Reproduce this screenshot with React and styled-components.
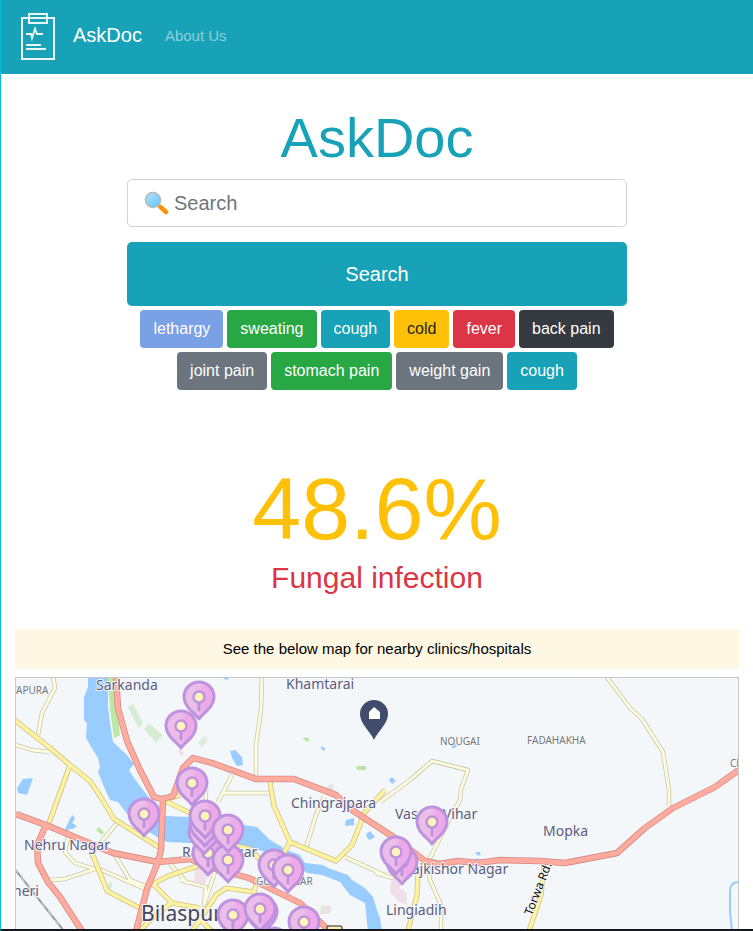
import React from "react";
import styled, { createGlobalStyle } from "styled-components";

const GlobalStyle = createGlobalStyle`
  *, *::before, *::after { box-sizing: border-box; }
  body {
    margin: 0;
    background: #fff;
    font-family: "Liberation Sans", Arial, sans-serif;
    font-size: 16px;
    line-height: 24px;
    color: #212529;
  }
`;

const Page = styled.div`
  min-height: 100vh;
  border-left: 1px solid #00bcd4;
  border-bottom: 2px solid #14181c;
`;

const NavBar = styled.nav`
  display: flex;
  align-items: center;
  height: 74px;
  padding: 0 16px 4px;
  background: #17a2b8;
`;

const Brand = styled.a`
  display: flex;
  align-items: center;
  gap: 16px;
  font-size: 20px;
  line-height: 30px;
  color: #fff;
  text-decoration: none;
`;

const LogoIcon = styled.svg`
  display: block;
  width: 40px;
  height: 50px;
  margin-top: 4px;
`;

const NavLink = styled.a`
  margin-left: 23px;
  padding-top: 2px;
  font-size: 15px;
  color: rgba(255, 255, 255, 0.5);
  text-decoration: none;
`;

const Main = styled.main`
  padding: 30px 14px 0;
`;

const Title = styled.h1`
  margin: 0 0 8px;
  font-size: 56px;
  font-weight: 400;
  line-height: 67px;
  text-align: center;
  color: #17a2b8;
`;

const SearchForm = styled.form`
  display: flex;
  flex-direction: column;
  gap: 15px;
  max-width: 500px;
  margin: 0 auto;
`;

const SearchField = styled.div`
  position: relative;
`;

const SearchIcon = styled.svg`
  position: absolute;
  top: 12px;
  left: 17px;
  width: 25px;
  height: 24px;
  pointer-events: none;
`;

const SearchInput = styled.input`
  display: block;
  width: 100%;
  height: 48px;
  padding: 8px 16px 8px 46px;
  border: 1px solid #ced4da;
  border-radius: 5px;
  background: #fff;
  font-family: inherit;
  font-size: 20px;
  line-height: 30px;
  color: #495057;
  &::placeholder { color: #6c757d; opacity: 1; }
`;

const SearchButton = styled.button`
  height: 64px;
  border: 0;
  border-radius: 5px;
  background: #17a2b8;
  font-family: inherit;
  font-size: 20px;
  color: #fff;
`;

const TagList = styled.div`
  display: flex;
  flex-wrap: wrap;
  justify-content: center;
  gap: 4px;
  max-width: 500px;
  margin: 4px auto 0;
`;

const Tag = styled.button`
  height: 38px;
  padding: 0 13px;
  border: 0;
  border-radius: 4px;
  background: ${(p) => p.$bg};
  font-family: inherit;
  font-size: 16px;
  line-height: 24px;
  color: ${(p) => p.$fg || "#fff"};
`;

const Result = styled.section`
  margin-top: 66px;
  text-align: center;
`;

const Percent = styled.div`
  font-size: 88px;
  line-height: 106px;
  color: #ffc107;
`;

const Condition = styled.h2`
  margin: 0;
  font-size: 30px;
  font-weight: 400;
  line-height: 32px;
  color: #dc3545;
`;

const Notice = styled.p`
  margin: 35px 0 8px;
  padding: 8px;
  background: #fdf7e3;
  font-size: 15px;
  line-height: 24px;
  text-align: center;
  color: #000;
`;

const MapFrame = styled.div`
  border: 1px solid #c8c8c8;
  border-bottom: 0;
  background: #f4f7fa;
`;

const MapCanvas = styled.svg`
  display: block;
  width: 100%;
  height: 251px;
  font-family: "Noto Sans", "Open Sans", sans-serif;
`;

const TAGS = [
  { label: "lethargy", bg: "#7aa0e6" },
  { label: "sweating", bg: "#28a745" },
  { label: "cough", bg: "#17a2b8" },
  { label: "cold", bg: "#ffc107", fg: "#212529" },
  { label: "fever", bg: "#dc3545" },
  { label: "back pain", bg: "#343a40" },
  { label: "joint pain", bg: "#6c757d" },
  { label: "stomach pain", bg: "#28a745" },
  { label: "weight gain", bg: "#6c757d" },
  { label: "cough", bg: "#17a2b8" },
];

const WATER = [
  "M88 676V687L84 697V720L87 723L86 738L93 750L98 758L100 767L98 772L104 787L110 800L118 802L128 815L143 828L157 837L167 842L190 843L225 842L247 847L270 853L290 862L300 868L307 873L322 875L340 882L350 895L365 903L368 932H382L380 918L377 910L373 897L365 888L352 880L348 875L328 868L323 865L305 863L300 855L287 850L270 840L257 827L243 825L215 818L190 817L165 816L147 795L134 778L129 770L134 764L127 755L113 742L110 723L108 707V676Z",
  "M17 788L23 779L33 778L27 795L18 793Z",
  "M65 829L71 817L73 815L75 819L72 823L77 826L73 829L69 829L66 832Z",
  "M230 751L235 750L242 757L243 765L237 766L232 758Z",
  "M223 677H229L228 680L224 679Z",
  "M321 746L325 748L325 751L321 749Z",
  "M452 742L455 743L457 746L453 749L451 746Z",
  "M389 780L392 777L396 781L392 784Z",
  "M346 820L354 818L354 825L345 826Z",
  "M366 834L370 831L375 837L370 840L367 838Z",
  "M475 852L480 852L481 854L478 856ZM473 860L479 858L479 862L473 862Z",
];

const PARKS = [
  { d: "M108 676H116L117 705L120 735L114 738L110 710Z", fill: "#b8e7a6" },
  { d: "M128 707L133 704L143 723L139 729Z", fill: "#d6edd3" },
  { d: "M144 729L149 723L163 735L156 743Z", fill: "#d6edd3" },
  { d: "M198 742L205 735L208 740L202 748Z", fill: "#dfebdf" },
  { d: "M303 739L305 737L310 739L308 742Z", fill: "#b8e7a6" },
  { d: "M356 766H366V770H357Z", fill: "#b8e7a6" },
  { d: "M96 830L99 827L104 832L102 835Z", fill: "#b8e7a6" },
  { d: "M106 884L112 881L112 888L108 891Z", fill: "#dfebdf" },
  { d: "M178 751L181 749L184 754L181 756Z", fill: "#efdfe8" },
  { d: "M195 867L210 867L205 884L194 881Z", fill: "#efdfe8" },
  { d: "M391 881L400 878L400 888L407 894V905L400 902L390 893Z", fill: "#efdfe8" },
  { d: "M321 905L332 906L330 914L320 914Z", fill: "#e9e4de" },
  { d: "M326 787L333 783L334 790L326 791Z", fill: "#e9e4de" },
];

const LANES = [
  "M53 676L55 688L42 713L38 735",
  "M16 745L32 750L50 752",
  "M262 676L261 710L256 745L256 778",
  "M232 775L218 802M222 793H270M206 790L205 818",
  "M380 802L410 780L432 761L468 770L461 789L460 800L450 818L428 862L430 880L441 905V931",
  "M606 676L630 708L642 719L663 752L669 790V806",
  "M117 823L92 853M68 837L65 852L75 863L95 869L65 879L50 880",
  "M97 868L145 889M115 855L130 880L146 886M170 864L188 884",
  "M324 797L316 815L305 851",
  "M345 857L380 873L392 878",
  "M180 880L206 887L204 905L216 869M375 873L392 878L402 872L415 855",
];

const STREETS = [
  "M12 718L50 748L70 765L90 781L100 796L114 819L160 848",
  "M70 765L49 823M92 853L107 891L140 908M165 801L180 808L192 814",
  "M153 884L168 876L192 868L215 860M153 884L172 903L200 908M165 800L180 795",
  "M270 782L274 806L290 842L336 861L352 845L365 812L385 790M290 842L282 856L274 868M258 878L254 892L226 888L216 895L200 920L212 931M140 931L150 920L171 903",
  "M418 874L417 895L408 931M544 864L541 895L529 931",
  "M236 846L250 849L262 862M200 920L192 931",
];

const HIGHWAYS = [
  "M116 676L118 708L127 741L140 770L154 797L162 799L173 796L183 768L193 758L212 763L256 779L294 779L336 795L352 810L395 838L425 861L440 864L458 861L478 863L500 860L540 861L565 863L617 853L645 828L673 808L715 787L740 769",
  "M16 814L46 825L113 853L158 862L190 859L215 869L249 878L300 903L320 922L332 933",
  "M46 825L37 845L38 863L48 882L60 897L82 931",
  "M163 798L161 850L158 862L147 889L136 931",
];

const LABELS = [
  { x: 96, y: 690, text: "Sarkanda" },
  { x: 286, y: 689, text: "Khamtarai" },
  { x: 291, y: 808, text: "Chingrajpara" },
  { x: 395, y: 819, text: "Vasant Vihar" },
  { x: 24, y: 850, text: "Nehru Nagar" },
  { x: 543, y: 836, text: "Mopka" },
  { x: 182, y: 857, text: "Rajiv Nagar" },
  { x: 403, y: 874, text: "Rajkishor Nagar" },
  { x: 386, y: 915, text: "Lingiadih" },
  { x: 13, y: 896, text: "heri" },
];

const SMALL_LABELS = [
  { x: 11, y: 694, text: "YAPURA" },
  { x: 440, y: 745, text: "NOUGAI" },
  { x: 527, y: 744, text: "FADAHAKHA" },
  { x: 730, y: 767, text: "CH" },
  { x: 256, y: 885, text: "GOL NAGAR" },
];

const PINS = [
  [199, 697], [181, 726], [192, 783], [144, 814],
  [208, 853], [204, 832], [205, 824], [205, 816],
  [228, 860], [228, 830], [274, 865], [288, 870],
  [233, 915], [274, 943], [262, 912], [260, 909], [304, 922],
  [432, 822], [402, 862], [396, 852],
];

function ClinicPin({ x, y }) {
  return (
    <g transform={`translate(${x} ${y})`}>
      <path
        d="M0 22C-4 16-15 10-15 0A15 15 0 0 1 15 0C15 10 4 16 0 22Z"
        fill="url(#pinFill)"
        stroke="#bd93df"
        strokeWidth="3"
        strokeLinejoin="round"
      />
      <path d="M0 6V13" stroke="#bd93df" strokeWidth="3" strokeLinecap="round" />
      <circle r="5.5" fill="#fff3b8" stroke="#bd93df" strokeWidth="2.4" />
    </g>
  );
}

function Roads({ paths, casing, fill, width }) {
  const d = paths.join("");
  return (
    <g fill="none" strokeLinejoin="round">
      <path d={d} stroke={casing} strokeWidth={width + 1.6} />
      <path d={d} stroke={fill} strokeWidth={width} />
    </g>
  );
}

function ClinicMap() {
  return (
    <MapCanvas
      viewBox="16 678 722 251"
      preserveAspectRatio="xMidYMin slice"
      role="img"
      aria-label="Map of nearby clinics and hospitals"
    >
      <defs>
        <linearGradient id="pinFill">
          <stop offset="0.5" stopColor="#ebbde9" />
          <stop offset="0.65" stopColor="#eea9e8" />
        </linearGradient>
      </defs>
      <path d={WATER.join("")} fill="#99cdff" />
      {PARKS.map((p) => (
        <path key={p.d} d={p.d} fill={p.fill} />
      ))}
      <path d="M14 868L64 931" stroke="#999" strokeWidth="2" />
      <path d="M14 868L64 931" stroke="#ddd" strokeWidth="1" strokeDasharray="6 5" />
      <Roads paths={LANES} casing="#c9c8aa" fill="#fdfce0" width={2.8} />
      <Roads paths={STREETS} casing="#cfc08a" fill="#fff3a0" width={3.6} />
      <Roads paths={HIGHWAYS} casing="#d48a86" fill="#ffab9d" width={4.8} />
      <path d="M739 882C733 882 730 885 730 891V912L732 931" fill="none" stroke="#99cdff" strokeWidth="2" />
      <g stroke="#f4f7fa" strokeWidth="2" strokeLinejoin="round" paintOrder="stroke">
        <g fill="#5d5d80" fontSize="14">
          {LABELS.map((l) => (
            <text key={l.text} x={l.x} y={l.y}>{l.text}</text>
          ))}
        </g>
        <g fill="#77777a" fontSize="10">
          {SMALL_LABELS.map((l) => (
            <text key={l.text} x={l.x} y={l.y}>{l.text}</text>
          ))}
        </g>
        <text x="141" y="921" fontSize="21" fill="#45455e">Bilaspur</text>
        <text transform="translate(532 916) rotate(-69)" fontSize="12" fill="#111">Torwa Rd.</text>
      </g>
      <rect x="327" y="926" width="15" height="8" rx="1" fill="#fbeeb0" stroke="#222" />
      <path d="M331 929V933M334 929V933M338 929V933" stroke="#222" />
      {PINS.map(([x, y]) => (
        <ClinicPin key={`${x}-${y}`} x={x} y={y} />
      ))}
      <g transform="translate(374 714)">
        <path d="M0 26C-3 18-14 10-14 0A14 14 0 0 1 14 0C14 10 3 18 0 26Z" fill="#414b6b" />
        <path d="M-5 5V-2L0 -7L6 -2V5Z" fill="#fff" />
      </g>
    </MapCanvas>
  );
}

function ClipboardLogo() {
  return (
    <LogoIcon viewBox="17 12 40 50" fill="none" stroke="#e9f7f9" strokeWidth="2" aria-hidden="true">
      <path d="M28 18H22V59H54V18H48" />
      <path d="M29 14H47V23H29Z" />
      <path d="M28 18H48" />
      <path d="M26 34H31L32 38L35 29L37 34H43" />
      <path d="M26 45H41M26 49H46" />
    </LogoIcon>
  );
}

function Magnifier() {
  return (
    <SearchIcon viewBox="0 0 25 24" aria-hidden="true">
      <defs>
        <linearGradient id="lens" x1="0" y1="0" x2="1" y2="1">
          <stop offset="0" stopColor="#b5e5fb" />
          <stop offset="1" stopColor="#5cc3f8" />
        </linearGradient>
      </defs>
      <path d="M13 13L17 17" stroke="#8d9499" strokeWidth="2.500" />
      <path d="M16.500 16L22 21" stroke="#f99307" strokeWidth="4.500" strokeLinecap="round" />
      <circle cx="9" cy="9" r="7.500" fill="url(#lens)" stroke="#b4b8bb" strokeWidth="1.500" />
    </SearchIcon>
  );
}

export default function App() {
  return (
    <Page>
      <GlobalStyle />
      <NavBar>
        <Brand href="#">
          <ClipboardLogo />
          AskDoc
        </Brand>
        <NavLink href="#about">About Us</NavLink>
      </NavBar>
      <Main>
        <Title>AskDoc</Title>
        <SearchForm onSubmit={(e) => e.preventDefault()}>
          <SearchField>
            <SearchInput type="text" aria-label="Search" placeholder="Search" />
            <Magnifier />
          </SearchField>
          <SearchButton type="submit">Search</SearchButton>
        </SearchForm>
        <TagList>
          {TAGS.map((t, i) => (
            <Tag key={i} type="button" $bg={t.bg} $fg={t.fg}>{t.label}</Tag>
          ))}
        </TagList>
        <Result>
          <Percent>48.6%</Percent>
          <Condition>Fungal infection</Condition>
        </Result>
        <Notice>See the below map for nearby clinics/hospitals</Notice>
        <MapFrame>
          <ClinicMap />
        </MapFrame>
      </Main>
    </Page>
  );
}
